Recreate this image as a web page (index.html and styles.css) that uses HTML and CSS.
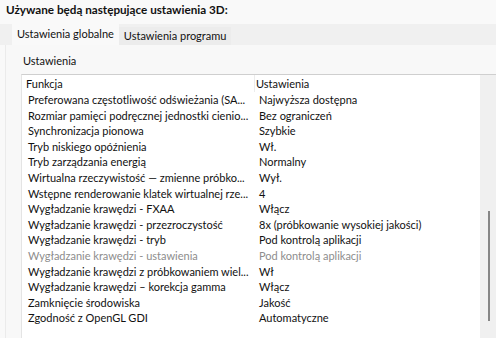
FILE: index.html
```html
<!DOCTYPE html>
<html lang="pl">
<head>
    <meta charset="UTF-8">
    <title>Ustawienia 3D</title>
    <link rel="stylesheet" href="styles.css">
</head>
<body>
    <div class="title">Używane będą następujące ustawienia 3D:</div>
    <div class="tabs">
        <div class="tab active">Ustawienia globalne</div>
        <div class="tab">Ustawienia programu</div>
    </div>
    <div class="panel">
        <div class="label">Ustawienia</div>
        <div class="listbox">
            <div class="list">
                <div class="row head">
                    <span class="c1">Funkcja</span>
                    <span class="c2">Ustawienia</span>
                </div>
                <div class="row"><span class="c1">Preferowana częstotliwość odświeżania (SA...</span><span class="c2">Najwyższa dostępna</span></div>
                <div class="row"><span class="c1">Rozmiar pamięci podręcznej jednostki cienio...</span><span class="c2">Bez ograniczeń</span></div>
                <div class="row"><span class="c1">Synchronizacja pionowa</span><span class="c2">Szybkie</span></div>
                <div class="row"><span class="c1">Tryb niskiego opóźnienia</span><span class="c2">Wł.</span></div>
                <div class="row"><span class="c1">Tryb zarządzania energią</span><span class="c2">Normalny</span></div>
                <div class="row"><span class="c1">Wirtualna rzeczywistość — zmienne próbko...</span><span class="c2">Wył.</span></div>
                <div class="row"><span class="c1">Wstępne renderowanie klatek wirtualnej rze...</span><span class="c2">4</span></div>
                <div class="row"><span class="c1">Wygładzanie krawędzi - FXAA</span><span class="c2">Włącz</span></div>
                <div class="row"><span class="c1">Wygładzanie krawędzi - przezroczystość</span><span class="c2">8x (próbkowanie wysokiej jakości)</span></div>
                <div class="row"><span class="c1">Wygładzanie krawędzi - tryb</span><span class="c2">Pod kontrolą aplikacji</span></div>
                <div class="row off"><span class="c1">Wygładzanie krawędzi - ustawienia</span><span class="c2">Pod kontrolą aplikacji</span></div>
                <div class="row"><span class="c1">Wygładzanie krawędzi z próbkowaniem wiel...</span><span class="c2">Wł</span></div>
                <div class="row"><span class="c1">Wygładzanie krawędzi – korekcja gamma</span><span class="c2">Włącz</span></div>
                <div class="row"><span class="c1">Zamknięcie środowiska</span><span class="c2">Jakość</span></div>
                <div class="row"><span class="c1">Zgodność z OpenGL GDI</span><span class="c2">Automatyczne</span></div>
            </div>
            <div class="scroll"><div class="thumb"></div></div>
        </div>
    </div>
</body>
</html>
```

FILE: styles.css
```css
*{
    margin: 0;
    padding: 0;
    box-sizing: border-box;
}
body{
    width: 496px;
    height: 338px;
    overflow: hidden;
    background: #f9f9f9;
    font-family: Lato, "Liberation Sans", sans-serif;
    font-size: 11px;
    color: #111;
}
.title{
    height: 24px;
    padding: 1px 0 0 6px;
    font-weight: bold;
    font-size: 11.7px;
    line-height: 16px;
}
.tabs{
    display: flex;
    align-items: flex-end;
    height: 21px;
    padding-left: 12px;
    background: #f0f0f0;
}
.tab{
    height: 18px;
    padding: 0 5px;
    line-height: 17px;
    white-space: nowrap;
    background: #ececec;
}
.tab.active{
    height: 21px;
    line-height: 19px;
    background: #f9f9f9;
}
.panel{
    height: 293px;
    margin-left: 5px;
    padding: 8px 0 0 15px;
    background: #f8f8f8;
    border-left: 1px solid #ebebeb;
}
.label{
    height: 21px;
    padding-left: 2px;
    line-height: 16px;
}
.listbox{
    display: flex;
    height: 270px;
    background: #fff;
    border-top: 1px solid #cfcfcf;
    border-left: 1px solid #e4e4e4;
}
.list{
    flex: 1;
}
.row{
    display: flex;
    height: 15.6px;
    line-height: 15.6px;
    white-space: nowrap;
}
.row .c1{
    width: 232px;
    padding-left: 6px;
    overflow: hidden;
}
.row .c2{
    padding-left: 5px;
}
.head{
    height: 17px;
    line-height: 17px;
}
.head .c1{
    padding-left: 4px;
}
.head .c2{
    padding-left: 1px;
    border-left: 1px solid #ececec;
}
.off{
    color: #8d8d8d;
}
.scroll{
    width: 16px;
    background: #f0f0f0;
    padding: 136px 0 0 8px;
}
.thumb{
    width: 2px;
    height: 110px;
    background: #868686;
}
```
